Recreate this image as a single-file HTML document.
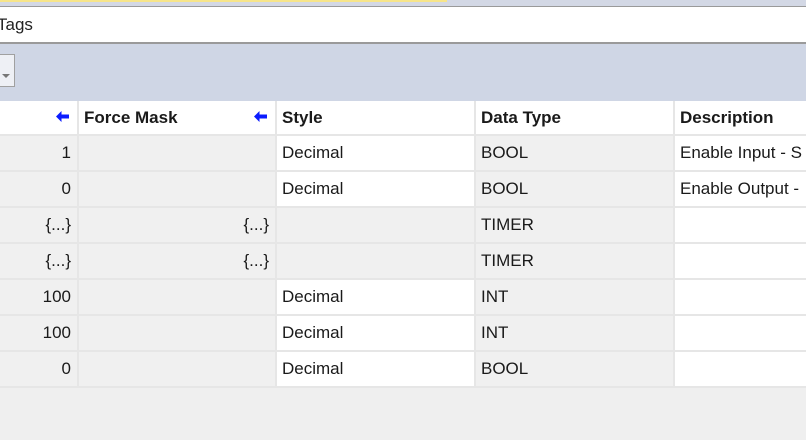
<!DOCTYPE html>
<html><head><style>
body{margin:0;width:806px;height:440px;overflow:hidden;background:#efefef;font-family:"Liberation Sans",sans-serif;position:relative}
.a{position:absolute}
.cell{position:absolute;box-sizing:border-box;font-size:17px;color:#1a1a1a;line-height:34px;padding:0 5px;white-space:nowrap;overflow:hidden}
.h{font-weight:bold;background:#fff}
.g{background:#f0f0f0}.w{background:#fff}
.r{text-align:right;padding-right:6px}
.arr{position:absolute;top:10px;line-height:0;display:block}
.arr svg{display:block}
</style></head><body>
<div class="a" style="left:0;top:0;width:806px;height:6px;background:#d3d8e5"></div>
<div class="a" style="left:0;top:0;width:447px;height:2px;background:#f7e58a"></div>
<div class="a" style="left:0;top:6px;width:806px;height:1px;background:#9a9a9a"></div>
<div class="a" style="left:0;top:7px;width:806px;height:35px;background:#fff"></div>
<div class="a" style="left:-3px;top:15px;font-size:17px;color:#222">Tags</div>
<div class="a" style="left:0;top:42px;width:806px;height:2px;background:#9a9a9a"></div>
<div class="a" style="left:0;top:44px;width:806px;height:57px;background:#cfd6e5"></div>
<div class="a" style="left:-2px;top:54px;width:15px;height:31px;background:#eef0f5;border:1px solid #a0a0a0"></div>
<div class="a" style="left:2px;top:74px;width:0;height:0;border-left:4px solid transparent;border-right:4px solid transparent;border-top:4px solid #777"></div>
<div id="grid"></div>
<script>
var cols=[[-5,79],[79,277],[277,476],[476,675],[675,830]];
var g=document.getElementById('grid'),h='';
var hdr=['','Force Mask','Style','Data Type','Description'];
var arr='<svg width="13" height="11" viewBox="0 0 13 11"><path d="M0 5.5L5.5 0V3.5H13V7.5H5.5V11Z" fill="#0b1cff"/></svg>';
for(var c=0;c<5;c++){h+='<div class="cell h" style="left:'+cols[c][0]+'px;top:101px;width:'+(cols[c][1]-cols[c][0])+'px;height:33px;border-right:2px solid #e6e6e6">'+hdr[c]+(c<2?'<span class="arr" style="right:8px">'+arr+'</span>':'')+'</div>';}
var rows=[['1','','Decimal','BOOL','Enable Input - S'],['0','','Decimal','BOOL','Enable Output -'],['{...}','{...}','','TIMER',''],['{...}','{...}','','TIMER',''],['100','','Decimal','INT',''],['100','','Decimal','INT',''],['0','','Decimal','BOOL','']];
for(var r=0;r<7;r++){var y=134+r*36;for(var c=0;c<5;c++){var bg=(c==0||c==1||c==3||(c==2&&rows[r][2]==''))?'g':'w';var al=(c<2)?' r':'';h+='<div class="cell '+bg+al+'" style="left:'+cols[c][0]+'px;top:'+y+'px;width:'+(cols[c][1]-cols[c][0])+'px;height:36px;border-top:2px solid #e6e6e6;border-right:2px solid #e6e6e6">'+rows[r][c]+'</div>';}}
h+='<div class="a" style="left:0;top:386px;width:806px;height:2px;background:#e6e6e6"></div>';
g.innerHTML=h;
</script>
</body></html>
